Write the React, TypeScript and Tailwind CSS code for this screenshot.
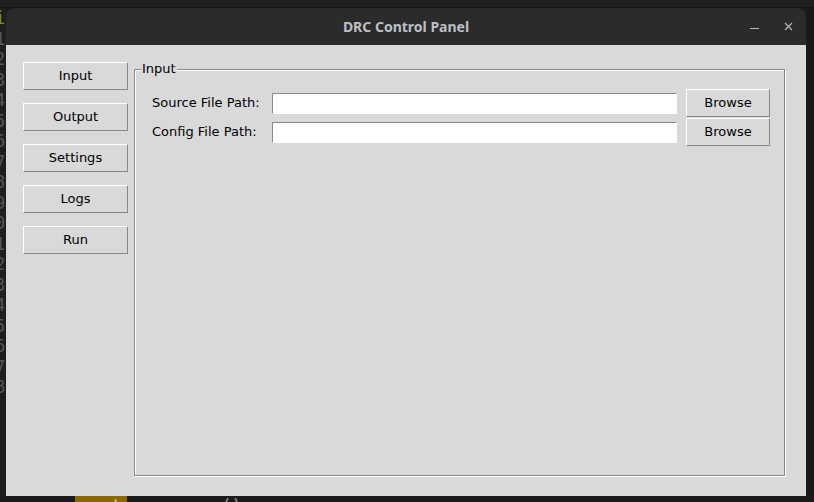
const sideButtons = ['Input', 'Output', 'Settings', 'Logs', 'Run'];
const fileRows = ['Source File Path:', 'Config File Path:'];
const lineNumbers = ['1', '2', '3', '4', '5', '6', '7', '8', '9', '0', '1', '2', '3', '4', '5', '6', '7', '8'];

const App = () => {
  return (
    <div className="w-[814px] h-[502px] bg-[#1b1b1b] flex flex-col overflow-hidden font-['DejaVu_Sans',sans-serif]">
      {/* strip above the window */}
      <div className="h-[8px] bg-[#1f1f1f] border-b border-[#151515]" />
      <div className="flex h-[488px]">
        {/* editor gutter behind the window */}
        <div className="w-[6px] overflow-hidden bg-[#1e1e1e]">
          <div className="-ml-[5px] flex flex-col font-['DejaVu_Sans_Mono',monospace] text-[17px] leading-[20.5px] text-[#565656]">
            <span className="text-[#6a9a1a]">i</span>
            {lineNumbers.map((n, i) => (
              <span key={i}>{n}</span>
            ))}
          </div>
        </div>
        {/* window */}
        <div className="w-[800px] flex flex-col rounded-t-[9px] overflow-hidden">
          <div className="h-[37px] bg-[#2b2b2b] flex items-center relative">
            <span className="flex-1 text-center pl-[0px] text-[14px] font-bold text-[#bcc0c4] font-['Noto_Sans',sans-serif]">
              DRC Control Panel
            </span>
            <span className="absolute left-[744px] top-[20px] w-[9px] h-[1px] bg-[#b8b8b8]" />
            <svg className="absolute left-[778px] top-[14px]" width="9" height="9" viewBox="0 0 9 9">
              <path d="M1 1 L8 8 M8 1 L1 8" stroke="#b8b8b8" strokeWidth="1.2" />
            </svg>
          </div>
          <div className="flex-1 bg-[#d9d9d9] flex pt-[17px] pl-[17px]">
            {/* side buttons */}
            <div className="flex flex-col gap-[13px] w-[105px]">
              {sideButtons.map((label) => (
                <button
                  key={label}
                  className="h-[28px] w-[105px] bg-[#d9d9d9] border border-t-white border-l-white border-b-[#888] border-r-[#888] text-[13px] text-black"
                >
                  {label}
                </button>
              ))}
            </div>
            {/* labelframe */}
            <div className="ml-[6px] mt-[7px] relative w-[651px] h-[407px] border border-[#888] shadow-[inset_1px_1px_0_#fff,1px_1px_0_#fff]">
              <span className="absolute -top-[9px] left-[7px] bg-[#d9d9d9] text-[13px] leading-[16px] text-black pr-[1px]">
                Input
              </span>
              <div className="flex flex-col gap-[1px] pt-[19px] pl-[17px]">
                {fileRows.map((label) => (
                  <div key={label} className="flex items-center h-[28px]">
                    <span className="w-[120px] text-[13px] text-black">{label}</span>
                    <div className="w-[405px] h-[21px] bg-white border border-t-[#8a8a8a] border-l-[#8a8a8a] border-b-white border-r-white" />
                    <button className="ml-[9px] h-[28px] w-[84px] bg-[#d9d9d9] border border-t-white border-l-white border-b-[#888] border-r-[#888] text-[13px] text-black">
                      Browse
                    </button>
                  </div>
                ))}
              </div>
            </div>
          </div>
        </div>
        <div className="flex-1 bg-[#191919]" />
      </div>
      {/* code behind the window, bottom edge */}
      <div className="flex-1 flex overflow-hidden bg-[#1b1b1b] font-['DejaVu_Sans_Mono',monospace] text-[17px] leading-[20px]">
        <span className="ml-[75px] w-[52px] bg-[#8a6a00] text-[#e0d0a0] text-center">root</span>
        <span className="ml-[43px] text-[#9a9a9a]">err.r()</span>
      </div>
    </div>
  );
};

export default App;
